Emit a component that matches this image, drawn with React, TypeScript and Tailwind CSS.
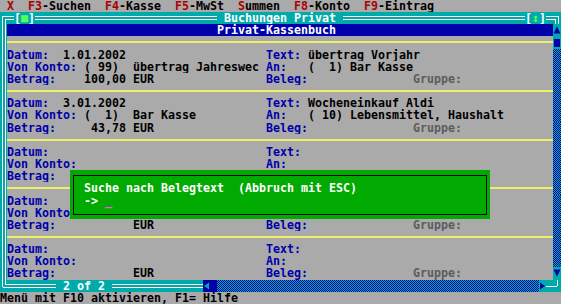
import React from "react";

type Seg = [number, string, string?];

function Segs({ segs, start }: { segs: Seg[]; start: number }) {
  const out: React.ReactNode[] = [];
  let cur = start;
  segs.forEach(([c, t, cls], i) => {
    if (c > cur) out.push(<span key={"g" + i}>{" ".repeat(c - cur)}</span>);
    out.push(
      <span key={"t" + i} className={cls}>
        {t}
      </span>
    );
    cur = c + [...t].length;
  });
  return <>{out}</>;
}

const L = "text-[#0000aa]";
const V = "text-black";
const G = "text-[#5c5c5c]";
const R = "text-[#aa0000]";

function DLine({ cls }: { cls: string }) {
  return (
    <div className={`${cls} h-full shrink-0 bg-[#00aaaa]`}>
      <div className="mt-[4px] h-[4px] border-y border-white" />
    </div>
  );
}

function Corner({ d, w = 7, stroke = "white" }: { d: string; w?: number; stroke?: string }) {
  return (
    <svg
      width={w}
      height="12.16"
      viewBox={`0 0 ${w} 12.16`}
      className="block shrink-0 bg-[#00aaaa]"
      shapeRendering="crispEdges"
    >
      <path d={d} stroke={stroke} strokeWidth="1" fill="none" />
    </svg>
  );
}

function LeftV() {
  return (
    <div className="w-[7px] h-full shrink-0 bg-[#00aaaa]">
      <div className="ml-[2px] w-[4px] h-full border-x border-white" />
    </div>
  );
}

function Track() {
  return (
    <div className="w-[8px] h-full shrink-0 bg-[image:repeating-conic-gradient(#0000aa_0_25%,#00aaaa_0_50%)] bg-[length:2px_2px]" />
  );
}

function UpArrow() {
  return (
    <svg width="8" height="12.16" viewBox="0 0 8 12.16" className="block shrink-0 bg-[#00aaaa]">
      <path d="M4 2.5 L7.5 9.5 L0.5 9.5 Z" fill="#0000aa" />
    </svg>
  );
}

function DownArrow() {
  return (
    <svg width="8" height="12.16" viewBox="0 0 8 12.16" className="block shrink-0 bg-[#00aaaa]">
      <path d="M0.5 2.5 L7.5 2.5 L4 9.5 Z" fill="#0000aa" />
    </svg>
  );
}

function Thumb() {
  return (
    <div className="w-[8px] h-full shrink-0 bg-[#00aaaa] flex items-center justify-center">
      <div className="w-[6px] h-[8px] bg-[#0000aa]" />
    </div>
  );
}

function Mid({ children }: { children?: React.ReactNode }) {
  return <div className="w-[546px] h-full shrink-0 bg-[#aaaaaa] whitespace-pre overflow-hidden">{children}</div>;
}

function Row({ children }: { children: React.ReactNode }) {
  return <div className="flex h-[12.16px] shrink-0">{children}</div>;
}

function Sep() {
  return (
    <div className="w-[546px] h-full shrink-0 bg-[#aaaaaa]">
      <div className="mt-[5px] h-[2px] bg-[#eeee6a]" />
    </div>
  );
}

type Entry = {
  date?: string;
  von?: string;
  vonName?: string;
  betrag?: string;
  text?: string;
  an?: string;
  anName?: string;
};

const entries: Entry[] = [
  {
    date: " 1.01.2002",
    von: "( 99)",
    vonName: "übertrag Jahreswec",
    betrag: "100,00",
    text: "übertrag Vorjahr",
    an: "(  1)",
    anName: "Bar Kasse",
  },
  {
    date: " 3.01.2002",
    von: "(  1)",
    vonName: "Bar Kasse",
    betrag: " 43,78",
    text: "Wocheneinkauf Aldi",
    an: "( 10)",
    anName: "Lebensmittel, Haushalt",
  },
  {},
  {},
  {},
];

function entryLines(e: Entry): Seg[][] {
  const r1: Seg[] = [[1, "Datum:", L]];
  if (e.date) r1.push([8, e.date, V]);
  r1.push([38, "Text:", L]);
  if (e.text) r1.push([44, e.text, V]);

  const r2: Seg[] = [[1, "Von Konto:", L]];
  if (e.von) r2.push([12, e.von, V]);
  if (e.vonName) r2.push([19, e.vonName, V]);
  r2.push([38, "An:", L]);
  if (e.an) r2.push([44, e.an, V]);
  if (e.anName) r2.push([50, e.anName, V]);

  const r3: Seg[] = [[1, "Betrag:", L]];
  if (e.betrag) r3.push([12, e.betrag, V]);
  r3.push([19, "EUR", V]);
  r3.push([38, "Beleg:", L]);
  r3.push([59, "Gruppe:", G]);
  return [r1, r2, r3];
}

export default function App() {
  // body rows 4..22 (19 rows)
  const body: { kind: "line" | "sep"; segs?: Seg[] }[] = [];
  entries.forEach((e, i) => {
    entryLines(e).forEach((s) => body.push({ kind: "line", segs: s }));
    if (i < entries.length - 1) body.push({ kind: "sep" });
  });

  return (
    <div className="relative w-[561px] h-[304px] overflow-hidden bg-[#aaaaaa] [font-family:'DejaVu_Sans_Mono',monospace] font-bold text-[11.63px] leading-[12.16px] flex flex-col">
      {/* Row 0: menu */}
      <div className="h-[12.16px] shrink-0 whitespace-pre text-black bg-[#aaaaaa]">
        <Segs
          start={0}
          segs={[
            [1, "X", R],
            [4, "F3", R],
            [6, "-Suchen"],
            [15, "F4", R],
            [17, "-Kasse"],
            [25, "F5", R],
            [27, "-MwSt"],
            [34, "S", R],
            [35, "ummen"],
            [42, "F8", R],
            [44, "-Konto"],
            [52, "F9", R],
            [54, "-Eintrag"],
          ]}
        />
      </div>

      {/* Row 1: title frame */}
      <Row>
        <Corner d="M7 4.5 H2.5 V12.16 M7 7.5 H5.5 V12.16" />
        <DLine cls="w-[7px]" />
        <div className="w-[21px] h-full shrink-0 bg-[#00aaaa] whitespace-pre text-white">
          [<span className="text-[#55ff55]">■</span>]
        </div>
        <DLine cls="w-[182px]" />
        <div className="w-[126px] h-full shrink-0 bg-[#00aaaa] whitespace-pre text-white"> Buchungen Privat </div>
        <DLine cls="w-[182px]" />
        <div className="w-[21px] h-full shrink-0 bg-[#00aaaa] whitespace-pre text-white">
          [<span className="text-[#55ff55]">↕</span>]
        </div>
        <DLine cls="w-[7px]" />
        <Corner w={8} d="M0 4.5 H5.5 V12.16 M0 7.5 H2.5 V12.16" />
      </Row>

      {/* Row 2: blue header */}
      <Row>
        <LeftV />
        <div className="w-[546px] h-full shrink-0 bg-[#0000aa] text-white whitespace-pre">
          <Segs start={1} segs={[[31, "Privat-Kassenbuch"]]} />
        </div>
        <UpArrow />
      </Row>

      {/* Row 3: separator */}
      <Row>
        <LeftV />
        <Sep />
        <Thumb />
      </Row>

      {body.map((b, i) => (
        <Row key={i}>
          <LeftV />
          {b.kind === "sep" ? (
            <Sep />
          ) : (
            <Mid>
              <Segs start={1} segs={b.segs!} />
            </Mid>
          )}
          {i === body.length - 1 ? <DownArrow /> : <Track />}
        </Row>
      ))}

      {/* Row 23: bottom frame */}
      <Row>
        <Corner d="M2.5 0 V7.5 H7 M5.5 0 V4.5 H7" />
        <DLine cls="w-[49px]" />
        <div className="w-[56px] h-full shrink-0 bg-[#00aaaa] whitespace-pre text-white"> 2 of 2 </div>
        <DLine cls="w-[91px]" />
        <svg width="7" height="12.16" viewBox="0 0 7 12.16" className="block shrink-0 bg-[#0000aa]">
          <path d="M1 6 L6 2.5 L6 9.5 Z" fill="#00aaaa" />
        </svg>
        <div className="w-[7px] h-full shrink-0 bg-[#0000aa]" />
        <div className="w-[322px] h-full shrink-0 bg-[image:repeating-conic-gradient(#0000aa_0_25%,#00aaaa_0_50%)] bg-[length:2px_2px]" />
        <svg width="7" height="12.16" viewBox="0 0 7 12.16" className="block shrink-0 bg-[#00aaaa]">
          <path d="M1 2.5 L6 6 L1 9.5 Z" fill="#0000aa" />
        </svg>
        <Corner d="M0 6.5 H7" />
        <Corner w={8} d="M0 6.5 H4.5 V0" />
      </Row>

      {/* Row 24: status line */}
      <div className="h-[12.16px] shrink-0 whitespace-pre text-black bg-[#aaaaaa]">Menü mit F10 aktivieren, F1= Hilfe</div>

      {/* Search dialog overlay */}
      <div className="absolute left-[70px] top-[170.24px] w-[420px] h-[48.64px] bg-[#00aa00] text-white whitespace-pre">
        <div className="absolute left-[3px] top-[5px] right-[3px] bottom-[4px] border border-black" />
        <div className="relative pt-[12.16px] pl-[14px]">
          <div className="h-[12.16px]">Suche nach Belegtext  (Abbruch mit ESC)</div>
          <div className="h-[12.16px]">
            -&gt; <span className="text-[#ff55ff]">_</span>
          </div>
        </div>
      </div>
    </div>
  );
}
